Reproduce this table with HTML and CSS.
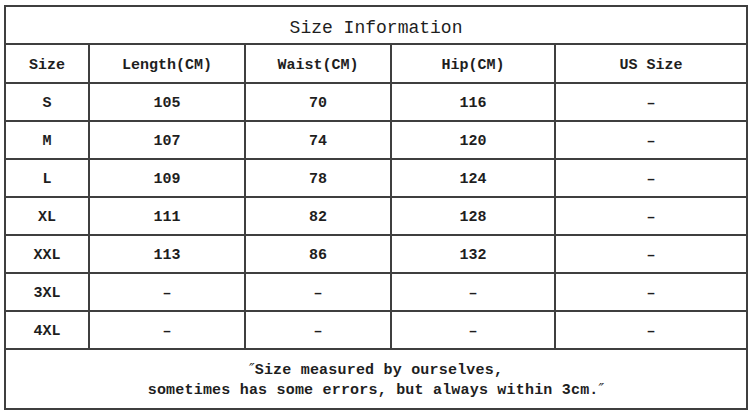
FILE: index.html
```html
<!DOCTYPE html>
<html>
<head>
<meta charset="utf-8">
<link rel="stylesheet" href="styles.css">
</head>
<body>
<table class="size-table">
  <colgroup>
    <col class="c1"><col class="c2"><col class="c3"><col class="c4"><col class="c5">
  </colgroup>
  <tr class="title-row"><td colspan="5" class="title">Size Information</td></tr>
  <tr class="head-row"><td>Size</td><td>Length(CM)</td><td>Waist(CM)</td><td>Hip(CM)</td><td>US Size</td></tr>
  <tr class="row"><td>S</td><td>105</td><td>70</td><td>116</td><td>–</td></tr>
  <tr class="row"><td>M</td><td>107</td><td>74</td><td>120</td><td>–</td></tr>
  <tr class="row"><td>L</td><td>109</td><td>78</td><td>124</td><td>–</td></tr>
  <tr class="row"><td>XL</td><td>111</td><td>82</td><td>128</td><td>–</td></tr>
  <tr class="row"><td>XXL</td><td>113</td><td>86</td><td>132</td><td>–</td></tr>
  <tr class="row"><td>3XL</td><td>–</td><td>–</td><td>–</td><td>–</td></tr>
  <tr class="row"><td>4XL</td><td>–</td><td>–</td><td>–</td><td>–</td></tr>
  <tr class="note-row"><td colspan="5" class="note"><span class="q">″</span>Size measured by ourselves,<br>sometimes has some errors, but always within 3cm.<span class="q">″</span></td></tr>
</table>
</body>
</html>
```
FILE: styles.css
```css
html, body {
  margin: 0;
  padding: 0;
  background: #ffffff;
}
.size-table {
  margin: 5px 0 0 4px;
  width: 742px;
  border-collapse: collapse;
  table-layout: fixed;
  font-family: "Liberation Mono", "DejaVu Sans Mono", monospace;
  font-weight: bold;
  font-size: 15px;
  color: #1e1e1e;
}
.c1 { width: 84px; }
.c2 { width: 156px; }
.c3 { width: 146px; }
.c4 { width: 164px; }
.c5 { width: 192px; }
.size-table td {
  border: 2px solid #3f3f3f;
  text-align: center;
  padding: 3px 0 0 0;
  height: 33px;
  line-height: 18px;
}
.title-row td {
  height: 30px;
  padding-top: 6px;
  font-size: 18px;
  font-weight: normal;
}
.head-row td {
  height: 33px;
  padding-top: 4px;
}
.note-row td {
  height: 55px;
  padding-top: 3px;
  line-height: 20px;
  letter-spacing: 0.2px;
}
.q {
  font-family: "DejaVu Serif", serif;
  font-style: italic;
  font-weight: normal;
  line-height: 0;
}
```
